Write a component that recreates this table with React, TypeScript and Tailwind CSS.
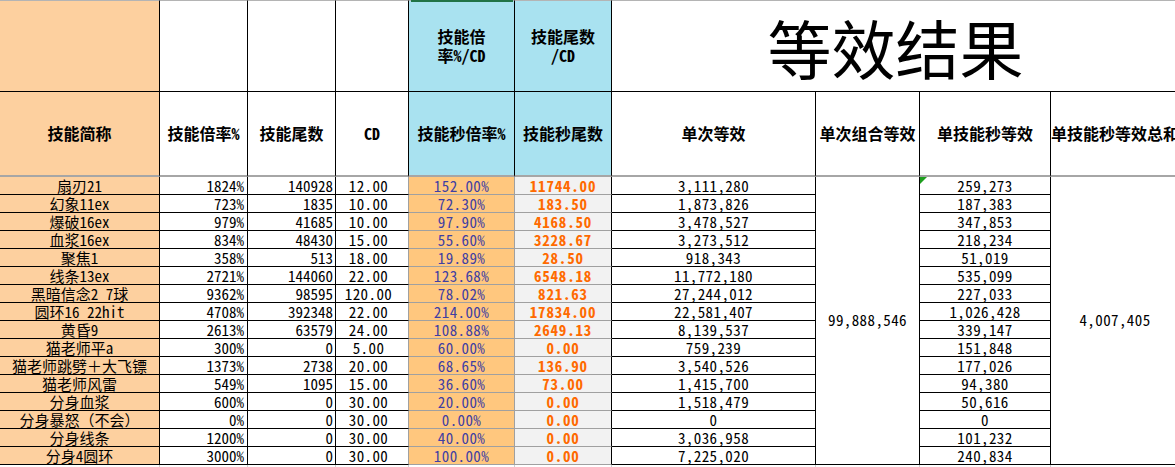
import React from "react";

type Row = [string, string, string, string, string, string, string, string];

const rows: Row[] = [
  ["扇刃21", "1824%", "140928", "12.00", "152.00%", "11744.00", "3,111,280", "259,273"],
  ["幻象11ex", "723%", "1835", "10.00", "72.30%", "183.50", "1,873,826", "187,383"],
  ["爆破16ex", "979%", "41685", "10.00", "97.90%", "4168.50", "3,478,527", "347,853"],
  ["血浆16ex", "834%", "48430", "15.00", "55.60%", "3228.67", "3,273,512", "218,234"],
  ["聚焦1", "358%", "513", "18.00", "19.89%", "28.50", "918,343", "51,019"],
  ["线条13ex", "2721%", "144060", "22.00", "123.68%", "6548.18", "11,772,180", "535,099"],
  ["黑暗信念2 7球", "9362%", "98595", "120.00", "78.02%", "821.63", "27,244,012", "227,033"],
  ["圆环16 22hit", "4708%", "392348", "22.00", "214.00%", "17834.00", "22,581,407", "1,026,428"],
  ["黄昏9", "2613%", "63579", "24.00", "108.88%", "2649.13", "8,139,537", "339,147"],
  ["猫老师平a", "300%", "0", "5.00", "60.00%", "0.00", "759,239", "151,848"],
  ["猫老师跳劈＋大飞镖", "1373%", "2738", "20.00", "68.65%", "136.90", "3,540,526", "177,026"],
  ["猫老师风雷", "549%", "1095", "15.00", "36.60%", "73.00", "1,415,700", "94,380"],
  ["分身血浆", "600%", "0", "30.00", "20.00%", "0.00", "1,518,479", "50,616"],
  ["分身暴怒（不会）", "0%", "0", "30.00", "0.00%", "0.00", "0", "0"],
  ["分身线条", "1200%", "0", "30.00", "40.00%", "0.00", "3,036,958", "101,232"],
  ["分身4圆环", "3000%", "0", "30.00", "100.00%", "0.00", "7,225,020", "240,834"],
];

const top1 = "border-t border-t-[#b4b4b4] border-r border-r-black border-b border-b-black";
const hdr2 = "border-r border-r-black border-b-2 border-b-[#a6a6a6] flex items-center justify-center text-[16px] font-bold leading-[19px] whitespace-nowrap";
const num = "[font-feature-settings:'hwid'_1]";
const dataBlack = "border-r border-b border-r-black border-b-black text-[15px] leading-[17px] whitespace-nowrap";

function Mixed({ text }: { text: string }) {
  const parts = text.split(/([\x20-\x7e]+)/).filter((p) => p.length > 0);
  return (
    <>
      {parts.map((p, i) =>
        /^[\x20-\x7e]+$/.test(p) ? (
          <span key={i} className={`${num} whitespace-pre`}>
            {p}
          </span>
        ) : (
          <span key={i}>{p}</span>
        )
      )}
    </>
  );
}

export default function App() {
  return (
    <div className="w-[1175px] h-[467px] overflow-hidden bg-white text-black font-['Noto_Sans_CJK_SC','Noto_Sans',sans-serif]">
      <div className="grid w-[1179px] grid-cols-[160px_88px_88px_73px_106px_97px_204px_104px_131px_128px] grid-rows-[92px_85px_repeat(17,18px)]">
        {/* Row 1 */}
        <div className={`${top1} bg-[#fdd09f]`} />
        <div className={top1} />
        <div className={top1} />
        <div className={top1} />
        <div className={`${top1} relative bg-[#a9e2f0] flex items-center justify-center text-center text-[16px] font-bold leading-[19px]`}>
          <div className="absolute left-[2px] right-[1px] top-[-1px] h-[2px] bg-[#217346]" />
          <span>
            技能倍
            <br />
            率<Mixed text="%/CD" />
          </span>
        </div>
        <div className={`${top1} bg-[#a9e2f0] flex items-center justify-center text-center text-[16px] font-bold leading-[19px]`}>
          <span>
            技能尾数
            <br />
            <Mixed text="/CD" />
          </span>
        </div>
        <div className="col-span-4 border-t border-t-[#b4b4b4] border-b border-b-black flex items-center justify-center">
          <span className="text-[64px] leading-none font-normal">等效结果</span>
        </div>

        {/* Row 2 */}
        <div className={`${hdr2} bg-[#fdd09f]`}>技能简称</div>
        <div className={hdr2}>
          <Mixed text="技能倍率%" />
        </div>
        <div className={hdr2}>技能尾数</div>
        <div className={hdr2}>
          <Mixed text="CD" />
        </div>
        <div className={`${hdr2} bg-[#a9e2f0]`}>
          <Mixed text="技能秒倍率%" />
        </div>
        <div className={`${hdr2} bg-[#a9e2f0]`}>技能秒尾数</div>
        <div className={hdr2}>单次等效</div>
        <div className={hdr2}>单次组合等效</div>
        <div className={hdr2}>单技能秒等效</div>
        <div className={`${hdr2} justify-start`}>单技能秒等效总和</div>

        {/* Data rows */}
        {rows.map((r, i) => (
          <React.Fragment key={i}>
            <div className={`${dataBlack} bg-[#fdd09f] text-center`}>
              <Mixed text={r[0]} />
            </div>
            <div className={`${dataBlack} text-right pr-[3px] ${num}`}>{r[1]}</div>
            <div className={`${dataBlack} text-right pr-[2px] ${num}`}>{r[2]}</div>
            <div className={`border-r border-b border-r-[#a0a0a0] border-b-black text-[15px] leading-[17px] text-center pr-[7px] tracking-[0.4px] ${num}`}>{r[3]}</div>
            <div className={`border-r border-b border-r-[#a0a0a0] border-b-[#a0a0a0] bg-[#ffc77e] text-[#3f3fa3] text-[15px] leading-[17px] text-center tracking-[0.4px] ${num}`}>{r[4]}</div>
            <div className={`border-r border-b border-r-black border-b-[#a0a0a0] bg-[#f2f2f2] text-[#ff6a00] font-bold text-[15px] leading-[17px] text-center tracking-[0.8px] ${num}`}>{r[5]}</div>
            <div className={`${dataBlack} text-center tracking-[0.4px] ${num}`}>{r[6]}</div>
            {i === 0 && (
              <div className={`row-[span_16_/_span_16] border-r border-b border-r-black border-b-black flex items-center justify-center text-[15px] tracking-[0.4px] ${num}`}>
                99,888,546
              </div>
            )}
            <div className={`${dataBlack} relative text-center tracking-[0.4px] ${num}`}>
              {i === 0 && (
                <div className="absolute left-0 top-0 w-0 h-0 border-t-[7px] border-t-[#1e9e1e] border-r-[7px] border-r-transparent" />
              )}
              {r[7]}
            </div>
            {i === 0 && (
              <div className={`row-[span_16_/_span_16] border-b border-b-black flex items-center justify-center text-[15px] tracking-[0.4px] ${num}`}>
                4,007,405
              </div>
            )}
          </React.Fragment>
        ))}

        {/* Trailing empty row */}
        <div className="border-r border-r-[#d0d0d0]" />
        <div className="border-r border-r-[#d0d0d0]" />
        <div className="border-r border-r-[#d0d0d0]" />
        <div className="border-r border-r-[#d0d0d0]" />
        <div className="border-r border-r-[#d0d0d0]" />
        <div className="border-r border-r-[#d0d0d0]" />
        <div className="border-r border-r-[#d0d0d0]" />
        <div className="border-r border-r-[#d0d0d0]" />
        <div className="border-r border-r-[#d0d0d0]" />
        <div />
      </div>
    </div>
  );
}
